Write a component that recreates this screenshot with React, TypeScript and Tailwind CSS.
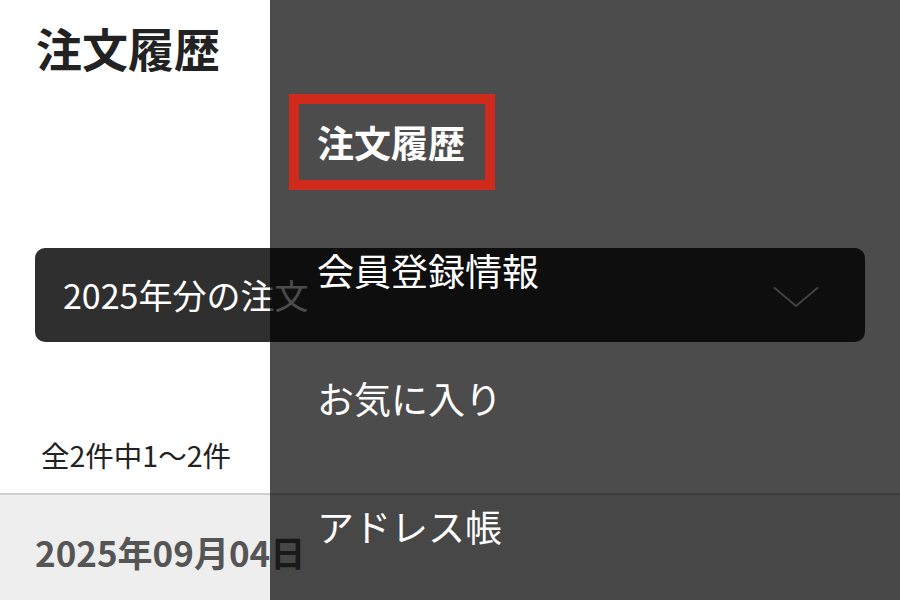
const menu = [
  { label: "注文履歴", current: true },
  { label: "会員登録情報", current: false },
  { label: "お気に入り", current: false },
  { label: "アドレス帳", current: false },
];

function Chevron() {
  return (
    <svg width="46" height="22" viewBox="0 0 46 22" fill="none" className="mt-[4px]">
      <polyline points="1,1.5 23,20 45,1.5" stroke="#e2e2e2" strokeWidth="1.8" strokeLinejoin="round" />
    </svg>
  );
}

export default function App() {
  return (
    <div className="relative h-screen w-full overflow-hidden bg-white font-['Noto_Sans_CJK_JP',sans-serif] text-[#222]">
      {/* page under the drawer */}
      <h1 className="px-[36px] pt-[15px] text-[46px] font-bold leading-[64px]">注文履歴</h1>

      <div className="mx-[35px] mt-[169px] flex h-[94px] items-center justify-between rounded-[10px] bg-[#2f2f2f] pl-[28px] pr-[46px] text-white">
        <span className="text-[34px] leading-none">2025年分の注文</span>
        <Chevron />
      </div>

      <p className="mt-[93px] px-[41px] text-[28.5px] leading-[40px]">全2件中1～2件</p>

      <div className="mt-[18px] border-t-2 border-[#cfcfcf] bg-[#eeeeee] px-[35px] pt-[35px] pb-[40px]">
        <span className="text-[35px] font-bold leading-[44px] text-[#555]">2025年09月04日</span>
      </div>

      {/* drawer overlay */}
      <nav className="absolute inset-y-0 right-0 left-[270px] bg-black/70 pt-[78px] text-white">
        {menu.map((m) => (
          <div key={m.label} className="relative flex h-[128px] items-center pl-[47px]">
            <span className={`text-[37px] leading-none ${m.current ? "font-bold" : "font-normal"}`}>{m.label}</span>
            {m.current && (
              <span className="absolute left-[19px] top-[16px] h-[96px] w-[206px] border-[10px] border-[#cf2a1b]" />
            )}
          </div>
        ))}
      </nav>
    </div>
  );
}
